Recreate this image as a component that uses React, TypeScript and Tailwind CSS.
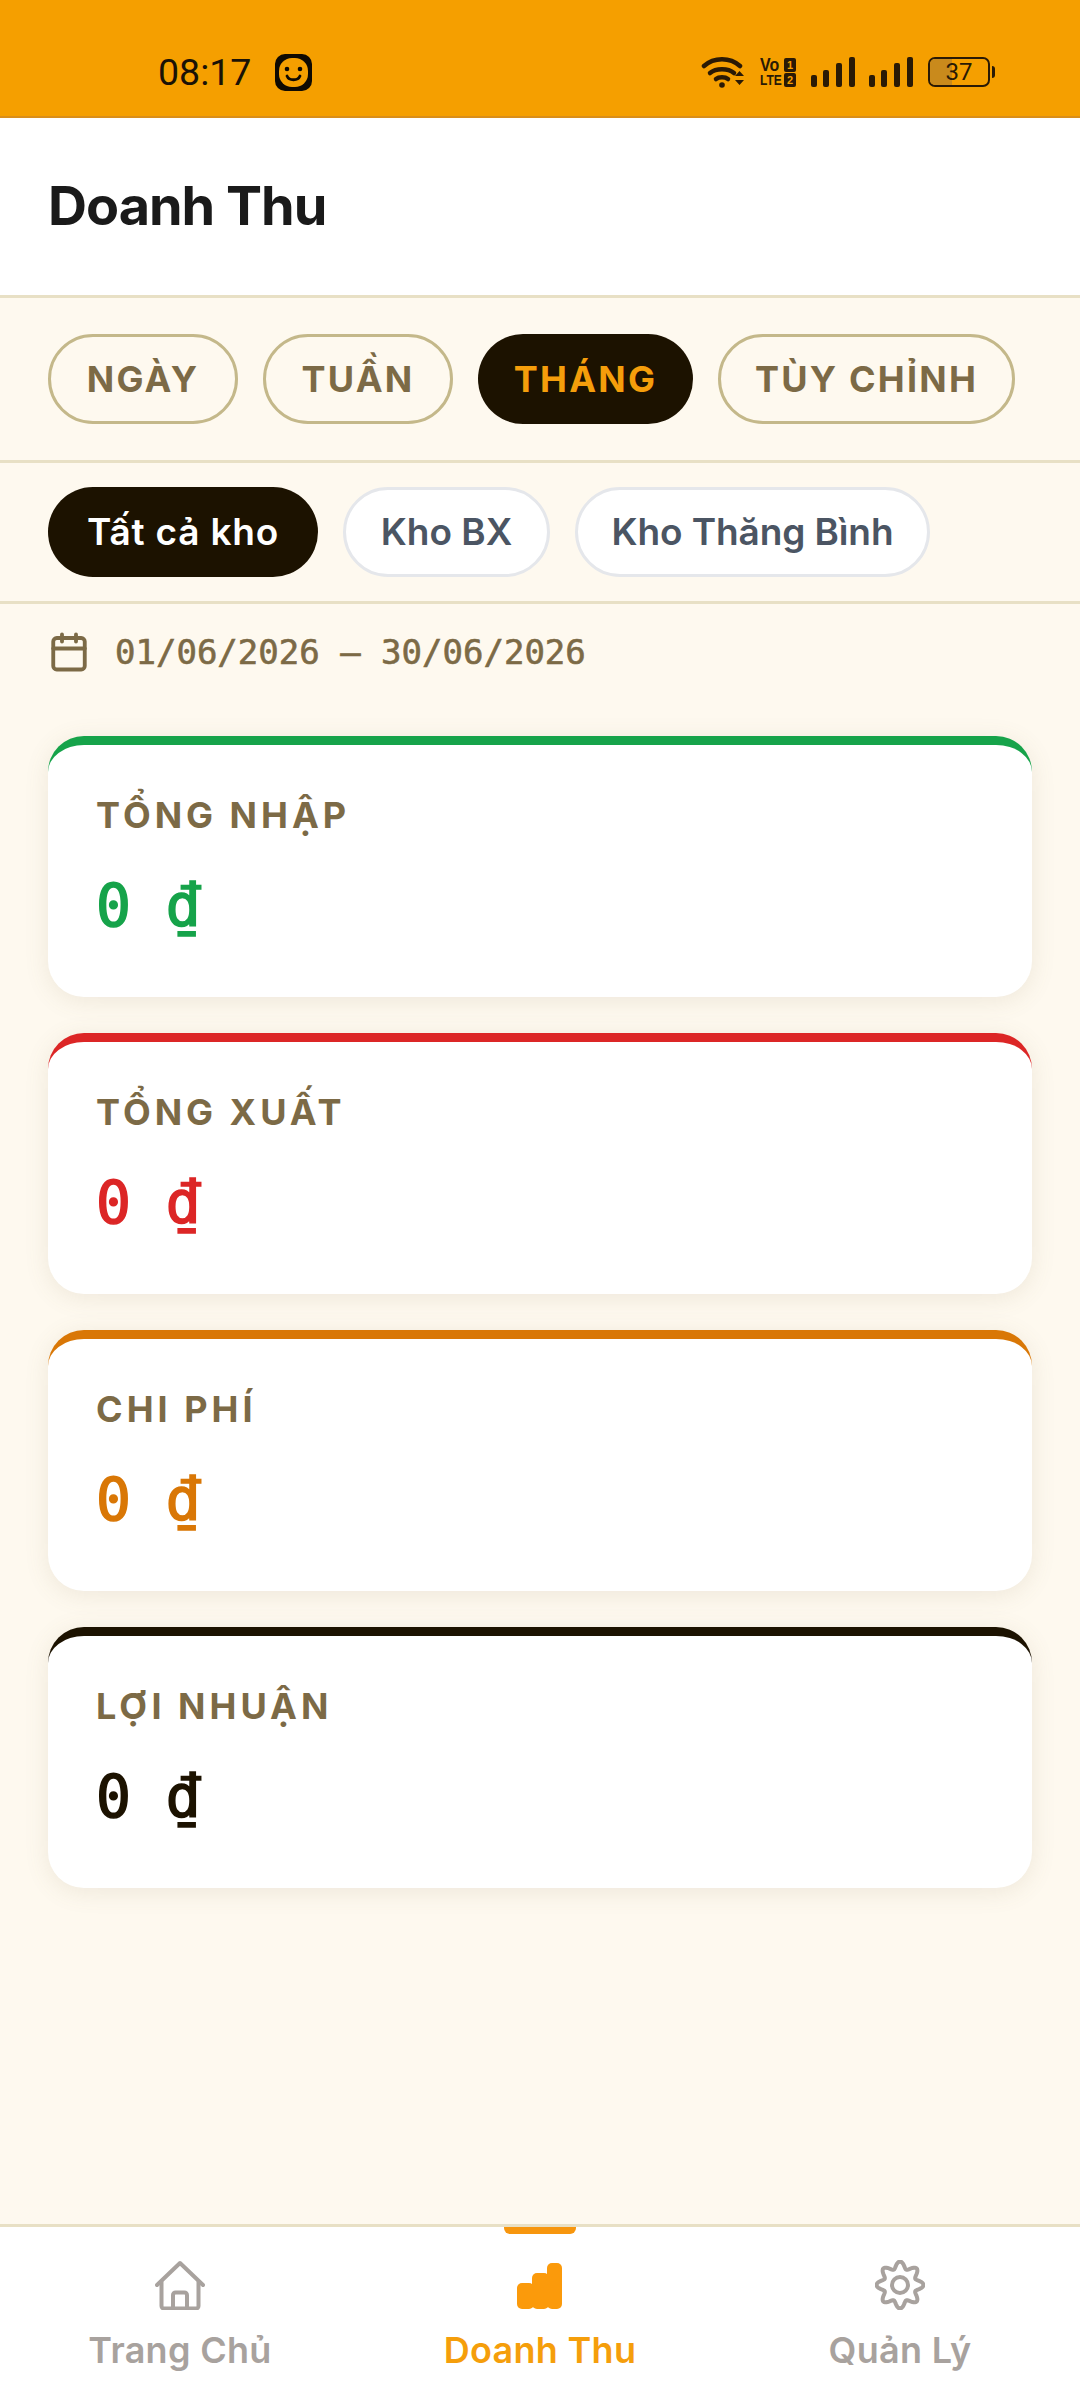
const SANS = "font-['Inter','Noto_Sans',sans-serif]";

const periods = [
  { label: "NGÀY", width: "w-[190px]" },
  { label: "TUẦN", width: "w-[190px]" },
  { label: "THÁNG", width: "w-[215px]" },
  { label: "TÙY CHỈNH", width: "w-[297px]" },
];
const stores = [
  { label: "Tất cả kho", width: "w-[270px]", track: "tracking-[0.8px]" },
  { label: "Kho BX", width: "w-[207px]", track: "" },
  { label: "Kho Thăng Bình", width: "w-[355px]", track: "tracking-[-0.1px]" },
];
const cards = [
  { label: "TỔNG NHẬP", top: "border-t-[#16a34a]", text: "text-[#16a34a]" },
  { label: "TỔNG XUẤT", top: "border-t-[#dc2626]", text: "text-[#dc2626]" },
  { label: "CHI PHÍ", top: "border-t-[#d97706]", text: "text-[#d97706]" },
  { label: "LỢI NHUẬN", top: "border-t-[#1c1200]", text: "text-[#1c1200]" },
];

// wavy outline for the settings gear
const gearPath = (() => {
  const pts: string[] = [];
  for (let i = 0; i < 160; i++) {
    const a = (i / 160) * Math.PI * 2;
    const r = 20 + 3.5 * Math.cos(8 * a);
    pts.push(`${(25 + r * Math.sin(a)).toFixed(2)} ${(25 - r * Math.cos(a)).toFixed(2)}`);
  }
  return `M${pts.join("L")}Z`;
})();

function SignalBars() {
  return (
    <svg width="44" height="30" viewBox="0 0 44 30" fill="#2a1a05">
      <rect x="0" y="18" width="6" height="12" rx="2" />
      <rect x="12" y="13" width="6" height="17" rx="2" />
      <rect x="25" y="6" width="6" height="24" rx="2" />
      <rect x="38" y="0" width="6" height="30" rx="2" />
    </svg>
  );
}

function StatusBar() {
  return (
    <div className="h-[118px] bg-[#f59f00] border-b-2 border-[#d98e1a] flex items-center justify-between pt-[28px] pl-[158px] pr-[85px]">
      <div className="flex items-center gap-[24px]">
        <span className="font-['Roboto',sans-serif] text-[37.5px] leading-[44px] text-[#1a1206]">08:17</span>
        <svg width="37" height="37" viewBox="0 0 37 37">
          <rect x="0" y="0" width="37" height="37" rx="10" fill="#0f0a02" />
          <rect x="4" y="4" width="29" height="29" rx="13" fill="#f59f00" />
          <circle cx="12" cy="15" r="2.300" fill="#0f0a02" />
          <circle cx="25" cy="15" r="2.300" fill="#0f0a02" />
          <path d="M12 22c2 5 11 5 13 0" fill="none" stroke="#0f0a02" strokeWidth="2.800" strokeLinecap="round" />
        </svg>
      </div>
      <div className="flex items-center">
        <svg width="46" height="32" viewBox="0 0 46 32" fill="none" stroke="#2a1a05" strokeWidth="4.500" strokeLinecap="round">
          <path d="M3 10c10-9 26-9 36 0" />
          <path d="M9 17c6-5 18-5 24 0" />
          <path d="M15 23c3-2.500 9-2.500 12 0" />
          <circle cx="21" cy="29" r="2.800" fill="#2a1a05" stroke="none" />
          <path d="M34 20l4.500-5 4.500 5zM34 24l4.500 5 4.500-5z" fill="#2a1a05" stroke="none" />
        </svg>
        <div className="ml-[13px] w-[36px] flex flex-col gap-[1px] font-['Liberation_Sans',sans-serif] font-bold text-[#2a1a05]">
          <div className="h-[14px] flex justify-between items-center">
            <span className="text-[16px] leading-[14px] scale-y-110">Vo</span>
            <span className="w-[12px] h-[14px] rounded-[2px] bg-[#2a1a05] text-[#f59f00] text-[11px] leading-[14px] text-center">1</span>
          </div>
          <div className="h-[14px] flex justify-between items-center">
            <span className="text-[12px] leading-[14px] scale-y-125">LTE</span>
            <span className="w-[12px] h-[14px] rounded-[2px] bg-[#2a1a05] text-[#f59f00] text-[11px] leading-[14px] text-center">2</span>
          </div>
        </div>
        <div className="ml-[15px] flex gap-[14px]">
          <SignalBars />
          <SignalBars />
        </div>
        <div className="relative ml-[15px] w-[62px] h-[30px] rounded-[7px] border-2 border-[#2a1a05] flex items-center justify-center overflow-hidden">
          <div className="absolute left-0 top-0 bottom-0 w-[22px] bg-[#c98a1c]" />
          <span className="relative font-['Roboto',sans-serif] text-[24px] leading-none text-[#2a1a05]">37</span>
        </div>
        <div className="w-[3px] h-[12px] ml-[2px] rounded-r bg-[#2a1a05]" />
      </div>
    </div>
  );
}

export default function App() {
  return (
    <div className={`${SANS} w-[1080px] h-[2400px] bg-[#fef9ef] flex flex-col`}>
      <StatusBar />

      <div className="h-[180px] bg-white border-b-[3px] border-[#e8e0c5] flex items-center px-[48px] pb-[2px]">
        <h1 className="text-[54px] font-bold tracking-[-1px] text-[#1a1a1a]">Doanh Thu</h1>
      </div>

      <div className="h-[165px] border-b-[3px] border-[#e8e0c5] flex items-center gap-[25px] px-[48px]">
        {periods.map((p) => (
          <button
            key={p.label}
            className={
              p.label === "THÁNG"
                ? `${p.width} h-[90px] rounded-full bg-[#1c1200] text-[#f59e0b] text-[36px] font-bold tracking-[2.2px]`
                : `${p.width} h-[90px] rounded-full border-[3px] border-[#c4b88a] text-[#7c6a46] text-[36px] font-bold tracking-[2.2px]`
            }
          >
            {p.label}
          </button>
        ))}
      </div>

      <div className="h-[141px] border-b-[3px] border-[#e8e0c5] flex items-center gap-[25px] px-[48px]">
        {stores.map((s, i) => (
          <button
            key={s.label}
            className={
              i === 0
                ? `${s.width} ${s.track} h-[90px] rounded-full bg-[#1c1200] text-white text-[37px] font-semibold`
                : `${s.width} ${s.track} h-[90px] rounded-full bg-white border-[3px] border-[#e5e7eb] text-[#4b5563] text-[37px] font-semibold`
            }
          >
            {s.label}
          </button>
        ))}
      </div>

      <div className="flex items-center gap-[25px] pl-[48px] pt-[24px] pb-[60px]">
        <svg width="42" height="42" viewBox="0 0 24 24" fill="none" stroke="#7c6a46" strokeWidth="2.200" strokeLinecap="round" strokeLinejoin="round">
          <path d="M8 2v4M16 2v4" />
          <rect x="3" y="4" width="18" height="18" rx="2" />
          <path d="M3 10h18" />
        </svg>
        <span className="font-['DejaVu_Sans_Mono',monospace] text-[34px] leading-[48px] text-[#7c6a46] [-webkit-text-stroke:0.6px_#7c6a46]">
          01/06/2026 — 30/06/2026
        </span>
      </div>

      <div className="flex flex-col gap-[36px] px-[48px]">
        {cards.map((c) => (
          <div
            key={c.label}
            className={`h-[261px] rounded-[36px] bg-white border-t-[9px] ${c.top} shadow-[0_4px_24px_rgba(124,106,70,0.12)] pt-[48px] px-[48px]`}
          >
            <div className="text-[36px] leading-[44px] font-bold tracking-[4px] text-[#7c6a46]">{c.label}</div>
            <div className={`font-['DejaVu_Sans_Mono',monospace] mt-[37px] text-[58px] leading-[64px] [-webkit-text-stroke:1.600px_currentColor] ${c.text}`}>
              0 ₫
            </div>
          </div>
        ))}
      </div>

      <div className="mt-auto relative h-[176px] bg-white border-t-[3px] border-[#e8e0c5] grid grid-cols-3">
        <div className="flex flex-col items-center pt-[33px] text-[#a8a29e]">
          <svg width="50" height="50" viewBox="0 0 50 50" fill="none" stroke="currentColor" strokeWidth="4" strokeLinecap="round" strokeLinejoin="round">
            <path d="M2 25L25 3l23 22" />
            <path d="M6.500 22v24a2.500 2.500 0 0 0 2.500 2.500h32a2.500 2.500 0 0 0 2.500-2.500V22" />
            <path d="M18 48V35a2.500 2.500 0 0 1 2.500-2.500h9A2.500 2.500 0 0 1 32 35v13" />
          </svg>
          <span className="text-[36px] leading-[48px] mt-[16px] font-semibold tracking-[0.3px]">Trang Chủ</span>
        </div>
        <div className="relative flex flex-col items-center pt-[33px] text-[#f59e0b]">
          <div className="absolute top-0 left-[144px] w-[72px] h-[7px] rounded-b-[6px] bg-[#f7960e]" />
          <svg width="50" height="50" viewBox="0 0 50 50" fill="#fb9a0b">
            <rect x="2" y="23" width="17" height="26" rx="5" />
            <rect x="17" y="13" width="17" height="36" rx="5" />
            <rect x="32" y="3" width="15" height="46" rx="5" />
          </svg>
          <span className="text-[36px] leading-[48px] mt-[16px] font-semibold tracking-[0.3px]">Doanh Thu</span>
        </div>
        <div className="flex flex-col items-center pt-[33px] text-[#a8a29e]">
          <svg width="50" height="50" viewBox="0 0 50 50" fill="none" stroke="currentColor" strokeWidth="4" strokeLinejoin="round">
            <path d={gearPath} />
            <circle cx="25" cy="25" r="8" />
          </svg>
          <span className="text-[36px] leading-[48px] mt-[16px] font-semibold tracking-[0.3px]">Quản Lý</span>
        </div>
      </div>
    </div>
  );
}
